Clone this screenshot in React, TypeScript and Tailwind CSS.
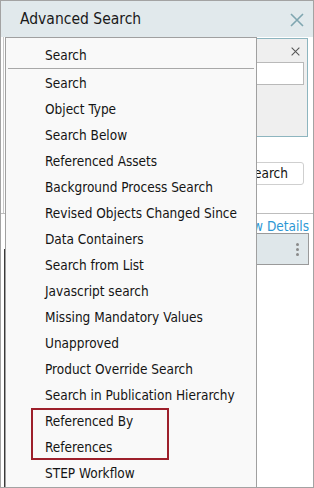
const items = [
  "Search",
  "Object Type",
  "Search Below",
  "Referenced Assets",
  "Background Process Search",
  "Revised Objects Changed Since",
  "Data Containers",
  "Search from List",
  "Javascript search",
  "Missing Mandatory Values",
  "Unapproved",
  "Product Override Search",
  "Search in Publication Hierarchy",
  "Referenced By",
  "References",
  "STEP Workflow",
]

function CloseIcon({ className }: { className?: string }) {
  return (
    <svg viewBox="0 0 14 14" className={className} fill="none" stroke="currentColor">
      <path d="M1 1L13 13M13 1L1 13" strokeWidth="1.6" />
    </svg>
  )
}

export default function App() {
  return (
    <div className="w-[314px] h-[488px] relative overflow-hidden bg-white border border-[#a3a3a3] text-[#141414] font-['DejaVu_Sans_Condensed','Liberation_Sans',sans-serif] flex flex-col">
      {/* Title bar */}
      <div className="h-[36px] shrink-0 bg-[#e1e9ec] flex items-center justify-between pl-[19px] pr-[9px] pt-[1px]">
        <span className="text-[15.5px] text-[#1a1a1a]">Advanced Search</span>
        <CloseIcon className="w-[14px] h-[14px] text-[#7fa6b0]" />
      </div>

      {/* Dialog body behind the menu */}
      <div className="flex-1 flex flex-col">
        <div className="h-[176px] ml-[2px] border-l border-[#c8c8c8] pt-[1px] pr-[5px] flex flex-col">
          <div className="h-[99px] ml-[1px] border border-[#8db5bf] bg-[#efefef] flex flex-col pr-[3px]">
            <div className="flex justify-end pt-[8px] pr-[4px]">
              <CloseIcon className="w-[9px] h-[9px] text-[#555]" />
            </div>
            <div className="h-[23px] mt-[6px] border border-[#b9b9b9] bg-white" />
          </div>
          <div className="flex justify-end mt-[25px] pr-[4px]">
            <div className="h-[23px] pl-[9px] pr-[15px] border border-[#cfcfcf] rounded-[3px] bg-white text-[13.5px] flex items-center">
              Search
            </div>
          </div>
        </div>
        <div className="h-px bg-[#bdbdbd]" />
        <div className="flex-1 ml-[3px] flex flex-col pr-[4px]">
          <div className="flex justify-end pt-[2px] h-[19px]">
            <span className="text-[13.5px] text-[#2c97d4]">Show Details</span>
          </div>
          <div className="flex flex-1">
            <div className="w-px bg-[#3a3a3a] mt-[16px]" />
            <div className="flex-1 flex flex-col">
              <div className="h-[32px] ml-[20px] border border-[#9a9a9a] bg-[#dfe7ea] flex items-center justify-end pr-[9px]">
                <div className="flex flex-col gap-[2px]">
                  <span className="w-[3px] h-[3px] rounded-full bg-[#8a8a8a]" />
                  <span className="w-[3px] h-[3px] rounded-full bg-[#8a8a8a]" />
                  <span className="w-[3px] h-[3px] rounded-full bg-[#8a8a8a]" />
                </div>
              </div>
            </div>
          </div>
        </div>
      </div>

      {/* Dropdown menu */}
      <div className="absolute left-[4px] top-[36px] w-[252px] h-[470px] bg-[#f9f9f9] border border-[#a0a0a0] pt-[4px]">
        <div className="h-[26px] flex items-center pl-[39px] text-[13.5px]">Search</div>
        <div className="h-px mx-[2px] bg-[#a8a8a8]" />
        <div className="mt-[1px] flex flex-col">
          {items.map((item) => (
            <div key={item} className="h-[26px] flex items-center pl-[39px] text-[13.5px] whitespace-nowrap">
              {item}
            </div>
          ))}
        </div>
        {/* highlight annotation */}
        <div className="absolute left-[25px] top-[370px] w-[138px] h-[52px] border-2 border-[#9d1f2b]" />
      </div>
    </div>
  )
}
